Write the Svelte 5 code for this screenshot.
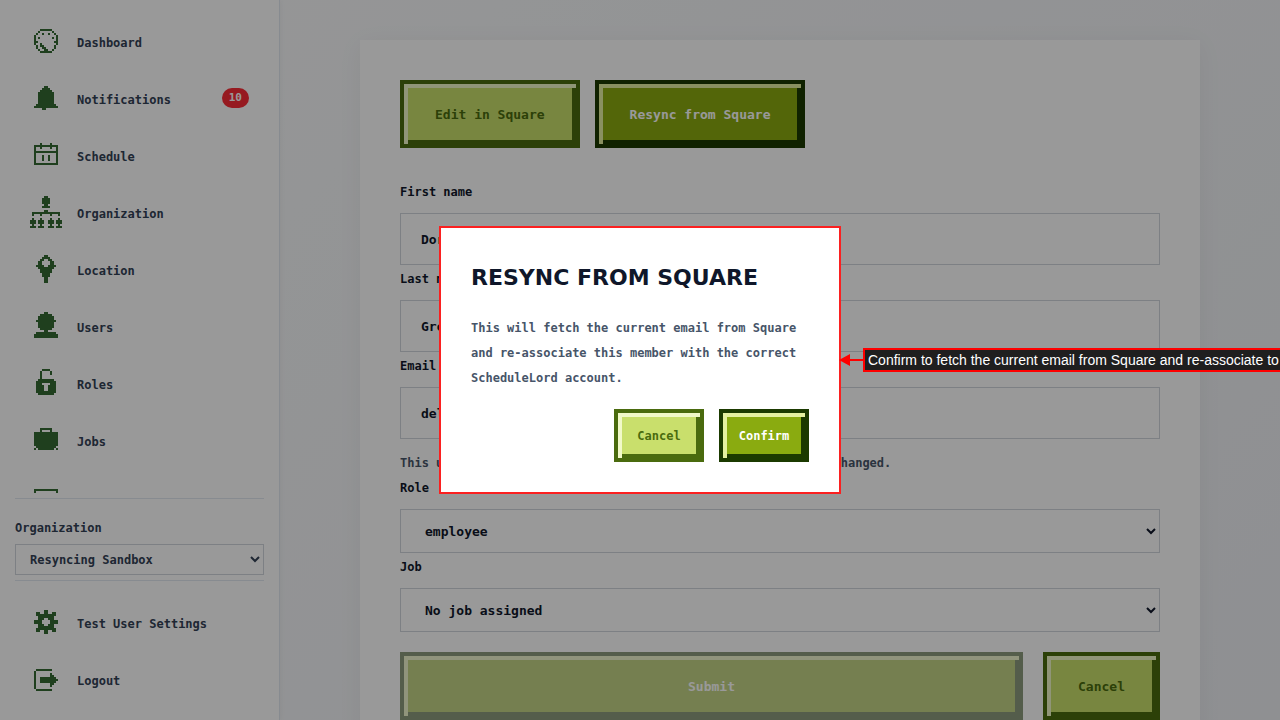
<script lang="ts">
  type Span = [number, number];
  type Icon = Record<number, Span[]>;

  // Pixel icons on a 16x16 grid: row -> list of [first, last] filled cells
  const sides: Span[] = [[2, 2], [13, 13]];

  const icons: Record<string, Icon> = {
    dashboard: {
      2: [[5, 10]],
      3: [[4, 4], [11, 11]],
      4: [[3, 3], [6, 6], [9, 9], [12, 12]],
      5: sides,
      6: [...sides, [4, 4], [11, 11]],
      7: sides,
      8: [[2, 3], [12, 13]],
      9: [...sides, [5, 5]],
      10: [[3, 3], [5, 6], [12, 12]],
      11: [[3, 3], [6, 7], [12, 12]],
      12: [[4, 4], [7, 8], [11, 11]],
      13: [[5, 10]],
    },
    bell: {
      2: [[7, 8]],
      3: [[6, 9]],
      4: [[5, 10]],
      5: [[4, 11]],
      6: [[4, 11]],
      7: [[4, 11]],
      8: [[4, 11]],
      9: [[4, 11]],
      10: [[4, 11]],
      11: [[3, 12]],
      12: [[2, 13]],
      13: [[6, 7]],
    },
    calendar: {
      2: [[5, 5], [10, 10]],
      3: [[2, 13]],
      4: [...sides, [5, 5], [10, 10]],
      5: sides,
      6: [[2, 13]],
      7: sides,
      8: [...sides, [6, 6], [9, 9]],
      9: [...sides, [6, 6], [9, 9]],
      10: [...sides, [6, 6], [9, 9]],
      11: sides,
      12: [[2, 13]],
    },
    organization: {
      0: [[7, 8]],
      1: [[6, 9]],
      2: [[6, 9]],
      3: [[6, 9]],
      4: [[7, 8]],
      5: [[6, 9]],
      7: [[7, 8]],
      8: [[1, 14]],
      9: [[1, 1], [5, 5], [10, 10], [14, 14]],
      11: [[1, 1], [5, 5], [10, 10], [14, 14]],
      12: [[0, 2], [4, 6], [9, 11], [13, 15]],
      13: [[0, 2], [4, 6], [9, 11], [13, 15]],
      14: [[1, 1], [5, 5], [10, 10], [14, 14]],
      15: [[0, 2], [4, 6], [9, 11], [13, 15]],
    },
    pin: {
      1: [[7, 8]],
      2: [[6, 9]],
      3: [[5, 6], [9, 10]],
      4: [[4, 5], [10, 11]],
      5: [[4, 5], [10, 11]],
      6: [[3, 6], [9, 12]],
      7: [[4, 11]],
      8: [[5, 10]],
      9: [[5, 10]],
      10: [[6, 9]],
      11: [[6, 9]],
      12: [[7, 8]],
      13: [[7, 8]],
      14: [[7, 8]],
    },
    user: {
      1: [[7, 8]],
      2: [[5, 10]],
      3: [[4, 11]],
      4: [[4, 11]],
      5: [[3, 12]],
      6: [[4, 11]],
      7: [[4, 11]],
      8: [[4, 11]],
      9: [[5, 10]],
      10: [[7, 8]],
      11: [[3, 12]],
      12: [[2, 13]],
      13: [[2, 13]],
    },
    lock: {
      1: [[6, 9]],
      2: [[5, 5], [10, 10]],
      3: [[5, 5], [10, 10]],
      4: [[5, 5]],
      5: [[5, 5]],
      6: [[4, 11]],
      7: [[3, 12]],
      8: [[3, 5], [10, 12]],
      9: [[3, 6], [9, 12]],
      10: [[3, 6], [9, 12]],
      11: [[3, 6], [9, 12]],
      12: [[3, 12]],
      13: [[4, 11]],
    },
    briefcase: {
      2: [[5, 10]],
      3: [[5, 5], [10, 10]],
      4: [[2, 13]],
      5: [[2, 13]],
      6: [[2, 13]],
      7: [[2, 13]],
      8: [[2, 13]],
      9: [[2, 13]],
      10: [[2, 13]],
      11: [[3, 12]],
      12: [[2, 2], [4, 11], [13, 13]],
    },
    card: {
      4: [[2, 13]],
      5: sides,
      6: sides,
      7: [[2, 13]],
      8: sides,
      9: sides,
      10: sides,
      11: [[2, 13]],
    },
    gear: {
      2: [[7, 8]],
      3: [[3, 4], [7, 8], [11, 12]],
      4: [[3, 12]],
      5: [[4, 11]],
      6: [[4, 6], [9, 11]],
      7: [[2, 5], [10, 13]],
      8: [[2, 5], [10, 13]],
      9: [[4, 6], [9, 11]],
      10: [[4, 11]],
      11: [[3, 12]],
      12: [[3, 4], [7, 8], [11, 12]],
      13: [[7, 8]],
    },
    logout: {
      3: [[3, 10]],
      4: [[2, 2]],
      5: [[2, 2], [10, 10]],
      6: [[2, 2], [10, 11]],
      7: [[2, 2], [5, 12]],
      8: [[2, 2], [5, 13]],
      9: [[2, 2], [5, 12]],
      10: [[2, 2], [10, 11]],
      11: [[2, 2], [10, 10]],
      12: [[2, 2]],
      13: [[3, 10]],
    },
  };

  function iconPath(name: string) {
    return Object.entries(icons[name])
      .flatMap(([row, spans]) => spans.map(([a, b]) => `M${a} ${row}h${b - a + 1}v1h-${b - a + 1}z`))
      .join('');
  }

  const navItems = [
    { label: 'Dashboard', icon: 'dashboard' },
    { label: 'Notifications', icon: 'bell', badge: 10 },
    { label: 'Schedule', icon: 'calendar' },
    { label: 'Organization', icon: 'organization' },
    { label: 'Location', icon: 'pin' },
    { label: 'Users', icon: 'user' },
    { label: 'Roles', icon: 'lock' },
    { label: 'Jobs', icon: 'briefcase' },
    { label: '', icon: 'card' },
  ];

  const accountItems = [
    { label: 'Test User Settings', icon: 'gear' },
    { label: 'Logout', icon: 'logout' },
  ];

  let firstName = $state('Doris');
  let lastName = $state('Grey');
  let email = $state('delia@example.com');
  let showConfirm = $state(true);
</script>

{#snippet navLink(item)}
  <li>
    <a class="nav-link" href="#{item.icon}">
      <svg class="icon" viewBox="0 0 16 16" shape-rendering="crispEdges" aria-hidden="true">
        <path d={iconPath(item.icon)} />
      </svg>
      <span class="nav-label">{item.label}</span>
      {#if item.badge}
        <span class="badge">{item.badge}</span>
      {/if}
    </a>
  </li>
{/snippet}

<div class="layout">
  <aside class="sidebar">
    <nav class="main-nav">
      <ul>
        {#each navItems as item}
          {@render navLink(item)}
        {/each}
      </ul>
    </nav>

    <div class="org-switcher">
      <label for="org">Organization</label>
      <select id="org">
        <option>Resyncing Sandbox</option>
      </select>
    </div>

    <nav class="account-nav">
      <ul>
        {#each accountItems as item}
          {@render navLink(item)}
        {/each}
      </ul>
    </nav>
  </aside>

  <main>
    <section class="card">
      <div class="toolbar">
        <button class="btn secondary" type="button">Edit in Square</button>
        <button class="btn primary" type="button" onclick={() => (showConfirm = true)}>Resync from Square</button>
      </div>

      <form onsubmit={(e) => e.preventDefault()}>
        <label for="first-name">First name</label>
        <input id="first-name" type="text" bind:value={firstName} />

        <label for="last-name">Last name</label>
        <input id="last-name" type="text" bind:value={lastName} />

        <label for="email">Email</label>
        <input id="email" type="email" bind:value={email} />
        <p class="help">This user is linked to Square so its email address can't be changed.</p>

        <label for="role">Role</label>
        <select id="role">
          <option>employee</option>
        </select>

        <label for="job">Job</label>
        <select id="job">
          <option>No job assigned</option>
        </select>

        <div class="form-actions">
          <button class="btn primary submit" type="submit" disabled>Submit</button>
          <button class="btn secondary" type="button">Cancel</button>
        </div>
      </form>
    </section>
  </main>
</div>

{#if showConfirm}
  <div class="backdrop">
    <div class="modal" role="dialog" aria-modal="true" aria-labelledby="modal-title">
      <h2 id="modal-title">RESYNC FROM SQUARE</h2>
      <p>
        This will fetch the current email from Square and re-associate this member with the correct
        ScheduleLord account.
      </p>
      <div class="modal-actions">
        <button class="btn small secondary" type="button" onclick={() => (showConfirm = false)}>Cancel</button>
        <button class="btn small primary" type="button" onclick={() => (showConfirm = false)}>Confirm</button>
      </div>

      <div class="callout">
        <svg class="arrow" viewBox="0 0 24 12" aria-hidden="true">
          <path d="M0 6L11 0V12zM10 5H24V7H10z" />
        </svg>
        <span class="callout-text">Confirm to fetch the current email from Square and re-associate to</span>
      </div>
    </div>
  </div>
{/if}

<style>
  :global(body) {
    background: #f8fafc;
  }

  .layout,
  .backdrop,
  .layout :is(button, input, select),
  .backdrop button {
    font-family: 'DejaVu Sans Mono', 'Liberation Mono', monospace;
    box-sizing: border-box;
  }

  .layout {
    display: flex;
    height: 100vh;
    overflow: hidden;
    font-size: 12px;
    line-height: 22px;
    color: #334155;
    background: linear-gradient(135deg, #fafbfc, #eef0f4);
  }

  ul {
    list-style: none;
    margin: 0;
    padding: 0;
    display: flex;
    flex-direction: column;
    gap: 1px;
  }

  /* Sidebar */
  .sidebar {
    display: flex;
    flex-direction: column;
    flex: 0 0 280px;
    box-sizing: border-box;
    padding: 13px 15px;
    border-right: 1px solid #e2e8f0;
    background: #fff;
    box-shadow: 0 0 6px rgba(0, 0, 0, 0.06);
  }

  .main-nav {
    flex: 1;
    min-height: 0;
    margin-bottom: 5px;
    overflow: hidden;
  }

  .nav-link {
    display: flex;
    align-items: center;
    gap: 15px;
    height: 56px;
    padding: 0 15px;
    color: inherit;
    text-decoration: none;
    font-weight: bold;
  }

  .nav-label,
  label,
  .help {
    padding-top: 3px;
  }

  .icon {
    flex: none;
    width: 32px;
    height: 32px;
    fill: #346a33;
  }

  .badge {
    margin-left: auto;
    padding: 0 7px;
    border-radius: 10px;
    background: #fb2c36;
    color: #fff;
    font-size: 11px;
    line-height: 20px;
  }

  .org-switcher {
    display: flex;
    flex-direction: column;
    gap: 5px;
    padding: 15px 0 5px;
    border-top: 1px solid #e2e8f0;
    border-bottom: 1px solid #e2e8f0;
    font-weight: bold;
  }

  .org-switcher select {
    height: 31px;
    padding: 0 10px;
    color: #334155;
    font-size: 12px;
  }

  .account-nav {
    padding-top: 13px;
  }

  select,
  input {
    width: 100%;
    border: 1px solid #d1d5dc;
    border-radius: 0;
    background: #fff;
    font-weight: bold;
  }

  /* Member form */
  main {
    flex: 1;
    min-width: 0;
    padding: 40px 80px;
    overflow-y: auto;
    scrollbar-width: none;
  }

  .card {
    padding: 40px;
    background: #fff;
    box-shadow: 0 4px 24px rgba(0, 0, 0, 0.05);
  }

  .toolbar {
    display: flex;
    gap: 15px;
    margin-bottom: 30px;
  }

  form label {
    display: block;
    margin-bottom: 10px;
    color: #0f172a;
    font-weight: bold;
  }

  form input,
  form select {
    display: block;
    padding: 0 20px;
    color: #0f172a;
    font-size: 13px;
  }

  form input {
    height: 52px;
  }

  form select {
    height: 44px;
  }

  .help {
    margin: 10px 0 0;
    color: #475569;
    font-weight: bold;
  }

  .form-actions {
    display: flex;
    gap: 20px;
    margin-top: 20px;
  }

  .submit {
    flex: 1;
  }

  /* Bevelled buttons */
  .btn {
    height: 68px;
    padding: 0 31px;
    border: 4px solid;
    border-radius: 0;
    font-size: 13px;
    font-weight: bold;
    cursor: pointer;
  }

  .btn.small {
    min-width: 90px;
    height: 53px;
    padding: 0 11px;
    font-size: 12px;
  }

  .primary {
    border-color: #1b3a00;
    background: #8aab10;
    color: #fff;
    box-shadow: inset 4px 4px 0 #e4f0a0, inset -4px -4px 0 #1b3a00;
  }

  .secondary {
    border-color: #4a6b0e;
    background: #c9df6c;
    color: #4a6b0e;
    box-shadow: inset 4px 4px 0 #f1f9c8, inset -4px -4px 0 #4a6b0e;
  }

  .btn:disabled {
    opacity: 0.5;
    cursor: not-allowed;
  }

  /* Confirm dialog */
  .backdrop {
    position: fixed;
    inset: 0;
    display: grid;
    place-items: center;
    overflow: hidden;
    background: rgba(0, 0, 0, 0.4);
  }

  .modal {
    position: relative;
    box-sizing: border-box;
    width: 402px;
    padding: 30px;
    border: 2px solid #fb2020;
    background: #fff;
    color: #475569;
    font-size: 12px;
    font-weight: bold;
    line-height: 25px;
  }

  .modal h2 {
    margin: 0 0 18px;
    color: #0f172a;
    font-family: 'DejaVu Sans', sans-serif;
    font-size: 22px;
    line-height: 40px;
  }

  .modal p {
    margin: 0 0 18px;
  }

  .modal-actions {
    display: flex;
    justify-content: flex-end;
    gap: 15px;
  }

  /* Arrow and note pointing at the dialog */
  .callout {
    position: absolute;
    top: 50%;
    left: 100%;
    display: flex;
    align-items: center;
    transform: translateY(-50%);
  }

  .arrow {
    flex: none;
    width: 24px;
    height: 12px;
    fill: #f00;
  }

  .callout-text {
    padding: 0 3px;
    border: 2px solid #f00;
    background: #1f1f1f;
    color: #fff;
    font: 14px/20px 'Liberation Sans', Arial, sans-serif;
    white-space: nowrap;
  }
</style>
